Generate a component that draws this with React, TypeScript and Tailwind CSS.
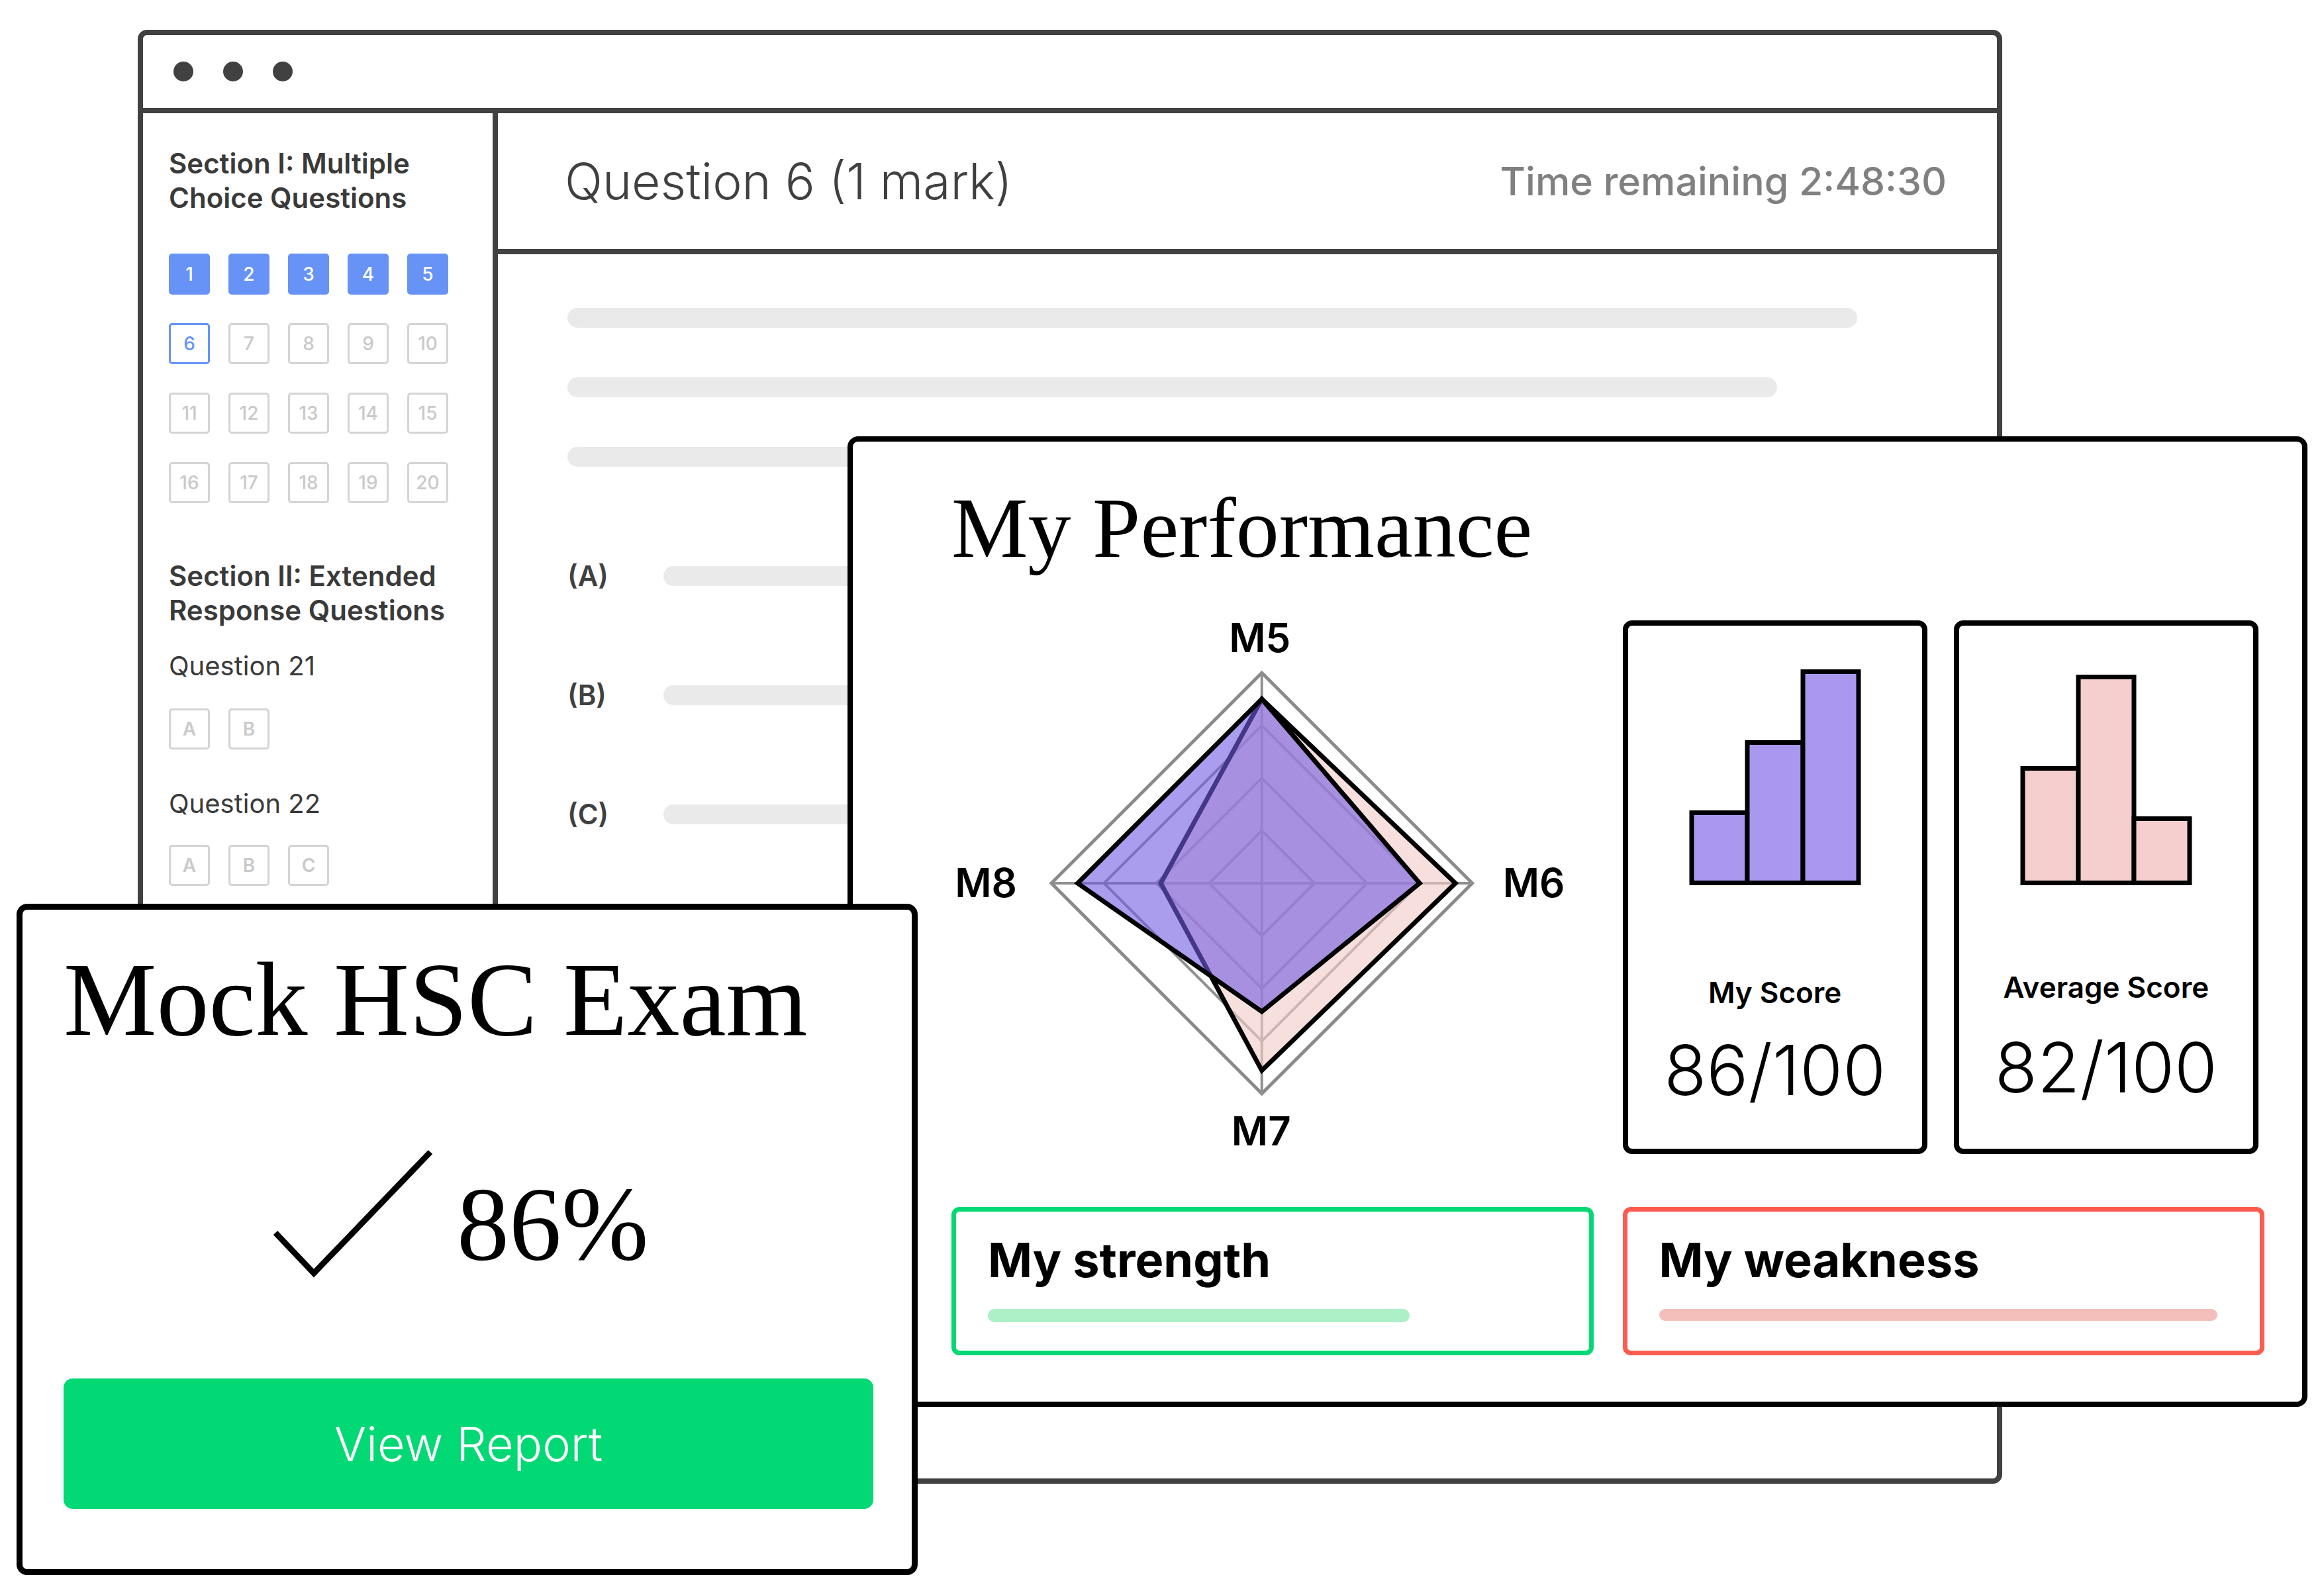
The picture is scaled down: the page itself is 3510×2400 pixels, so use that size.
import React from "react";

const serif = "font-[family-name:'Liberation_Serif',serif]";

function NumBox({ n, kind }: { n: string; kind: "done" | "current" | "todo" }) {
  const cls =
    kind === "done"
      ? "bg-[#6693F5] border-[#6693F5] text-white"
      : kind === "current"
      ? "bg-white border-[#6693F5] text-[#6693F5]"
      : "bg-white border-[#D4D4D4] text-[#C9C9C9]";
  return (
    <div
      className={`w-[62px] h-[62px] rounded-[5px] border-[3px] flex items-center justify-center text-[28px] font-medium leading-none ${cls}`}
    >
      {n}
    </div>
  );
}

function LetterBox({ l }: { l: string }) {
  return (
    <div className="w-[62px] h-[62px] rounded-[5px] border-[3px] border-[#D4D4D4] flex items-center justify-center text-[28px] font-semibold leading-none text-[#CACACA]">
      {l}
    </div>
  );
}

function Sidebar() {
  const nums = Array.from({ length: 20 }, (_, i) => i + 1);
  return (
    <aside className="w-[536px] shrink-0 border-r-[8px] border-[#414141] pl-[39px] pt-[50px] text-[#3a3a3a]">
      <p className="text-[42px] leading-[52px] font-semibold">
        Section I: Multiple
        <br />
        Choice Questions
      </p>
      <div className="mt-[58px] grid grid-cols-[repeat(5,62px)] gap-x-[28px] gap-y-[43px]">
        {nums.map((n) => (
          <NumBox key={n} n={String(n)} kind={n <= 5 ? "done" : n === 6 ? "current" : "todo"} />
        ))}
      </div>
      <p className="mt-[84px] text-[42px] leading-[52px] font-semibold">
        Section II: Extended
        <br />
        Response Questions
      </p>
      <p className="mt-[34px] text-[40px] leading-[48px] font-normal">Question 21</p>
      <div className="mt-[40px] flex gap-[28px]">
        <LetterBox l="A" />
        <LetterBox l="B" />
      </div>
      <p className="mt-[58px] text-[40px] leading-[48px] font-normal">Question 22</p>
      <div className="mt-[38px] flex gap-[28px]">
        <LetterBox l="A" />
        <LetterBox l="B" />
        <LetterBox l="C" />
      </div>
    </aside>
  );
}

function OptionRow({ label }: { label: string }) {
  return (
    <div className="mt-[150px] h-[30px] flex items-center">
      <span className="w-[145px] shrink-0 text-[42px] leading-none font-semibold text-[#404040]">{label}</span>
      <div className="h-[30px] w-[1500px] rounded-full bg-[#EAEAEA]" />
    </div>
  );
}

function BrowserWindow() {
  return (
    <div className="w-[2816px] h-[2196px] border-[8px] border-[#414141] rounded-[14px] flex flex-col bg-white">
      <div className="h-[118px] shrink-0 border-b-[8px] border-[#414141] flex items-center pl-[46px] gap-[45px]">
        <div className="w-[30px] h-[30px] rounded-full bg-[#414141]" />
        <div className="w-[30px] h-[30px] rounded-full bg-[#414141]" />
        <div className="w-[30px] h-[30px] rounded-full bg-[#414141]" />
      </div>
      <div className="flex flex-1 min-h-0">
        <Sidebar />
        <main className="flex-1 flex flex-col">
          <header className="h-[213px] shrink-0 border-b-[8px] border-[#414141] flex items-center justify-between pl-[101px] pr-[76px]">
            <span className="text-[75px] leading-none font-light text-[#404040]">Question 6 (1 mark)</span>
            <span className="text-[59px] leading-none font-medium text-[#808080]">Time remaining 2:48:30</span>
          </header>
          <div className="flex flex-col pl-[105px] pt-[81px]">
            <div className="h-[30px] w-[1948px] rounded-full bg-[#EAEAEA]" />
            <div className="mt-[75px] h-[30px] w-[1827px] rounded-full bg-[#EAEAEA]" />
            <div className="mt-[75px] h-[30px] w-[1600px] rounded-full bg-[#EAEAEA]" />
            <OptionRow label="(A)" />
            <OptionRow label="(B)" />
            <OptionRow label="(C)" />
          </div>
        </main>
      </div>
    </div>
  );
}

function Radar() {
  const cx = 469;
  const cy = 397;
  const R = 318;
  const poly = (r: number[]) =>
    [
      [cx, cy - r[0] * R],
      [cx + r[1] * R, cy],
      [cx, cy + r[2] * R],
      [cx - r[3] * R, cy],
    ]
      .map((p) => p.join(","))
      .join(" ");
  const levels = [0.25, 0.5, 0.75];
  return (
    <svg viewBox="0 0 970 806" className="w-full h-[806px] overflow-visible">
      {levels.map((l) => (
        <polygon key={l} points={poly([l, l, l, l])} fill="none" stroke="#909090" strokeWidth={4} />
      ))}
      <polygon points={poly([1, 1, 1, 1])} fill="none" stroke="#8A8A8A" strokeWidth={5} />
      <line x1={cx} y1={cy - R} x2={cx} y2={cy + R} stroke="#909090" strokeWidth={4} />
      <line x1={cx - R} y1={cy} x2={cx + R} y2={cy} stroke="#909090" strokeWidth={4} />
      <polygon
        points={poly([0.875, 0.92, 0.89, 0.48])}
        fill="rgba(242,204,202,0.62)"
        stroke="#000"
        strokeWidth={7}
        strokeLinejoin="miter"
      />
      <polygon
        points={poly([0.875, 0.75, 0.61, 0.875])}
        fill="rgba(115,92,227,0.6)"
        stroke="#000"
        strokeWidth={7}
        strokeLinejoin="miter"
      />
      <text x={466} y={48} textAnchor="middle" fontSize={60} fontWeight={600} fontFamily="Inter, sans-serif" fill="#000">
        M5
      </text>
      <text x={880} y={418} textAnchor="middle" fontSize={60} fontWeight={600} fontFamily="Inter, sans-serif" fill="#000">
        M6
      </text>
      <text x={468} y={793} textAnchor="middle" fontSize={60} fontWeight={600} fontFamily="Inter, sans-serif" fill="#000">
        M7
      </text>
      <text x={52} y={418} textAnchor="middle" fontSize={60} fontWeight={600} fontFamily="Inter, sans-serif" fill="#000">
        M8
      </text>
    </svg>
  );
}

function Bars({ tops, fill }: { tops: number[]; fill: string }) {
  const xs = [8, 92, 176];
  const bottom = 329.5;
  return (
    <svg width={268} height={334} viewBox="0 0 268 334" className="shrink-0">
      {tops.map((t, i) => (
        <rect key={i} x={xs[i]} y={t} width={84} height={bottom - t} fill={fill} stroke="#000" strokeWidth={7} />
      ))}
    </svg>
  );
}

function ScoreCard({
  label,
  score,
  tops,
  fill,
  labelGap,
  scoreGap,
}: {
  label: string;
  score: string;
  tops: number[];
  fill: string;
  labelGap: string;
  scoreGap: string;
}) {
  return (
    <div className="flex-1 border-[8px] border-black rounded-[14px] flex flex-col items-center pt-[59px]">
      <Bars tops={tops} fill={fill} />
      <span className={`${labelGap} text-[44px] leading-none font-semibold text-black whitespace-nowrap`}>{label}</span>
      <span className={`${scoreGap} text-[105px] leading-none font-light text-black`}>{score}</span>
    </div>
  );
}

function PerformanceCard() {
  return (
    <div className="absolute left-[1280px] top-[659px] w-[2205px] h-[1466px] rounded-[16px] border-[8px] border-black bg-white pl-[149px] pr-[57px] pt-[65px]">
      <h2 className={`${serif} text-[130px] leading-none font-normal text-black`}>My Performance</h2>
      <div className="mt-[75px] grid grid-cols-2 gap-x-[44px] gap-y-[80px]">
        <Radar />
        <div className="flex gap-[40px] h-[806px] pr-[9px]">
          <ScoreCard
            label="My Score"
            score="86/100"
            tops={[223.5, 117.5, 10.5]}
            fill="#A998EE"
            labelGap="mt-[139px]"
            scoreGap="mt-[42px]"
          />
          <ScoreCard
            label="Average Score"
            score="82/100"
            tops={[156.5, 18.5, 232.5]}
            fill="#F5CFCD"
            labelGap="mt-[131px]"
            scoreGap="mt-[46px]"
          />
        </div>
        <div className="h-[224px] border-[7px] border-[#02D874] rounded-[12px] pl-[48px] pt-[37px]">
          <p className="text-[72px] leading-none font-bold text-black">My strength</p>
          <div className="mt-[38px] h-[20px] w-[637px] rounded-full bg-[#ADEFC6]" />
        </div>
        <div className="h-[224px] border-[7px] border-[#FF5B4F] rounded-[12px] pl-[48px] pt-[37px]">
          <p className="text-[72px] leading-none font-bold text-black">My weakness</p>
          <div className="mt-[38px] h-[18px] w-[843px] rounded-full bg-[#F4BFBA]" />
        </div>
      </div>
    </div>
  );
}

function MockCard() {
  return (
    <div className="absolute left-[25px] top-[1365px] w-[1361px] h-[1014px] rounded-[16px] border-[9px] border-black bg-white pl-[62px] pr-[58px] pt-[57px] flex flex-col">
      <h1 className={`${serif} text-[158px] leading-none font-normal text-black whitespace-nowrap`}>Mock HSC Exam</h1>
      <div className="mt-[144px] flex items-start pl-[312px]">
        <svg width={250} height={200} viewBox="0 0 250 200" className="shrink-0">
          <polyline
            points="8,129 66,190 242,7"
            fill="none"
            stroke="#000"
            strokeWidth={9}
            strokeLinejoin="miter"
            strokeLinecap="butt"
          />
        </svg>
        <span className={`${serif} ml-[32px] mt-[37px] text-[158px] leading-none text-black`}>86%</span>
      </div>
      <button className="mt-[149px] h-[197px] w-full shrink-0 rounded-[14px] bg-[#02D873] text-white text-[72px] font-light leading-none">
        View Report
      </button>
    </div>
  );
}

export default function App() {
  return (
    <div className="relative w-[3510px] h-[2400px] overflow-hidden bg-white pl-[208px] pt-[45px] font-[family-name:Inter,sans-serif]">
      <BrowserWindow />
      <PerformanceCard />
      <MockCard />
    </div>
  );
}
